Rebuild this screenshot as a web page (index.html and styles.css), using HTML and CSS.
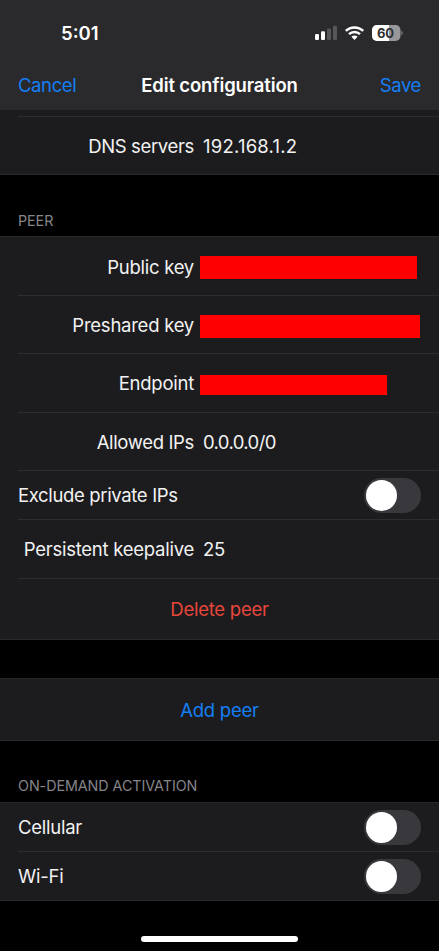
FILE: index.html
```html
<!DOCTYPE html>
<html lang="en">
<head>
<meta charset="utf-8">
<meta name="viewport" content="width=device-width, initial-scale=1">
<title>Edit configuration</title>
<link rel="stylesheet" href="styles.css">
</head>
<body>
<header class="header">
  <div class="status">
    <span class="time">5:01</span>
    <svg class="status-icons" width="90" height="18" viewBox="0 0 90 18" aria-hidden="true">
      <g fill="#fff">
        <rect x="1" y="10" width="4" height="6" rx="1.2"/>
        <rect x="7" y="7.3" width="4" height="8.700" rx="1.2"/>
        <g fill="#57575a">
          <rect x="13" y="4.400" width="4" height="11.600" rx="1.2"/>
          <rect x="19" y="1.700" width="4" height="14.300" rx="1.2"/>
        </g>
      </g>
      <g fill="none" stroke="#fff" stroke-width="2.500">
        <path d="M31.800 6.900a12.600 12.600 0 0 1 17.400 0"/>
        <path d="M35 10.200a8 8 0 0 1 11 0"/>
      </g>
      <path fill="#fff" d="M37.400 12.800a4.600 4.600 0 0 1 6.200 0L40.500 16z"/>
      <clipPath id="cell"><rect x="58" y="1" width="28.500" height="16" rx="5"/></clipPath>
      <g clip-path="url(#cell)">
        <rect x="58" y="1" width="29" height="16" fill="#98989a"/>
        <rect x="58" y="1" width="17" height="16" fill="#fff"/>
      </g>
      <path fill="#98989a" d="M87.500 6.500q2.200 2.500 0 5z"/>
      <text class="battery" x="71.500" y="13.500" text-anchor="middle">60</text>
    </svg>
  </div>
  <nav class="nav">
    <span class="link cancel">Cancel</span>
    <h1 class="title">Edit configuration</h1>
    <span class="link save">Save</span>
  </nav>
</header>
<main>
  <section class="group interface">
    <div class="row dns"><span class="label tight">DNS servers</span><span class="value address">192.168.1.2</span></div>
  </section>
  <h2 class="heading peer">PEER</h2>
  <section class="group ruled">
    <div class="row first"><span class="label">Public key</span><span class="mask public"></span></div>
    <div class="row short"><span class="label">Preshared key</span><span class="mask preshared"></span></div>
    <div class="row"><span class="label">Endpoint</span><span class="mask endpoint"></span></div>
    <div class="row short"><span class="label tight">Allowed IPs</span><span class="value zeros">0.0.0.0/0</span></div>
    <div class="row toggle"><span class="tight">Exclude private IPs</span><i class="switch"></i></div>
    <div class="row"><span class="label">Persistent keepalive</span><span class="value">25</span></div>
    <div class="row action delete">Delete peer</div>
  </section>
  <section class="group ruled add-group">
    <div class="row action add">Add peer</div>
  </section>
  <h2 class="heading">ON-DEMAND ACTIVATION</h2>
  <section class="group ruled">
    <div class="row toggle"><span>Cellular</span><i class="switch"></i></div>
    <div class="row toggle"><span>Wi-Fi</span><i class="switch"></i></div>
  </section>
</main>
<footer class="home"></footer>
</body>
</html>
```
FILE: styles.css
```css
* { box-sizing: border-box; }
body {
  margin: 0;
  width: 439px;
  height: 951px;
  overflow: hidden;
  display: flex;
  flex-direction: column;
  background: #000;
  color: #f2f2f2;
  font: 18.5px/24px Inter, sans-serif;
  letter-spacing: -0.25px;
}
.header { height: 110px; flex: none; background: #2a2a2c; }
.status {
  height: 60px;
  padding: 6px 35px 0 61px;
  display: flex;
  align-items: center;
  justify-content: space-between;
}
.time { color: #fff; font-weight: 600; font-size: 18.5px; letter-spacing: 0; }
.battery { font: 700 13px Inter, sans-serif; letter-spacing: 0; fill: #303032; }
.nav {
  height: 49px;
  padding: 0 18px;
  display: grid;
  grid-template-columns: 1fr auto 1fr;
  align-items: center;
}
.title { margin: 0; color: #fff; font-size: 18.5px; line-height: 24px; font-weight: 600; letter-spacing: -0.13px; }
.link { color: #147ff5; letter-spacing: -0.4px; }
.save { text-align: right; }
.group { background: #1c1c1e; }
.interface { height: 65px; padding-top: 6px; border-bottom: 1px solid #29292b; }
.ruled { border-top: 1px solid #29292b; border-bottom: 1px solid #29292b; }
.row {
  height: 59px;
  margin-left: 18px;
  padding-right: 18px;
  display: flex;
  align-items: center;
  border-bottom: 1px solid #2d2d2f;
}
.row.short { height: 58px; }
.row.first { padding-top: 2px; }
.row.dns { border-top: 1px solid #2d2d2f; }
.label { width: 176px; text-align: right; flex: none; white-space: nowrap; }
.tight { letter-spacing: -0.35px; }
.value { margin-left: 9px; }
.address { letter-spacing: 0.22px; }
.zeros { letter-spacing: -0.6px; }
.mask { background: #f00; margin-left: 6px; height: 23px; }
.public { width: 217px; }
.preshared { width: 220px; margin-top: 3px; }
.endpoint { width: 187px; height: 20px; margin-top: 3px; }
.row.toggle { height: 49px; justify-content: space-between; }
.row.toggle:last-child { height: 48px; }
.switch {
  width: 57px;
  height: 35px;
  padding: 2px;
  border-radius: 18px;
  background: #39393d;
}
.switch::before { content: ""; display: block; width: 31px; height: 31px; border-radius: 50%; background: #fff; }
.row.action { height: 61px; margin: 0; padding: 0; justify-content: center; }
.row.delete { height: 60px; color: #e8463c; }
.add { color: #147ff5; }
.row:last-child { border-bottom: 0; }
.add-group { margin-top: 38px; }
.heading {
  height: 61px;
  margin: 0;
  padding: 34px 18px 0;
  color: #858589;
  font-size: 14.3px;
  line-height: 22px;
  font-weight: 400;
  letter-spacing: -0.05px;
}
.heading.peer { padding-top: 35px; }
.home { width: 157px; height: 6px; margin: auto auto 9px; border-radius: 3px; background: #fff; }
```
